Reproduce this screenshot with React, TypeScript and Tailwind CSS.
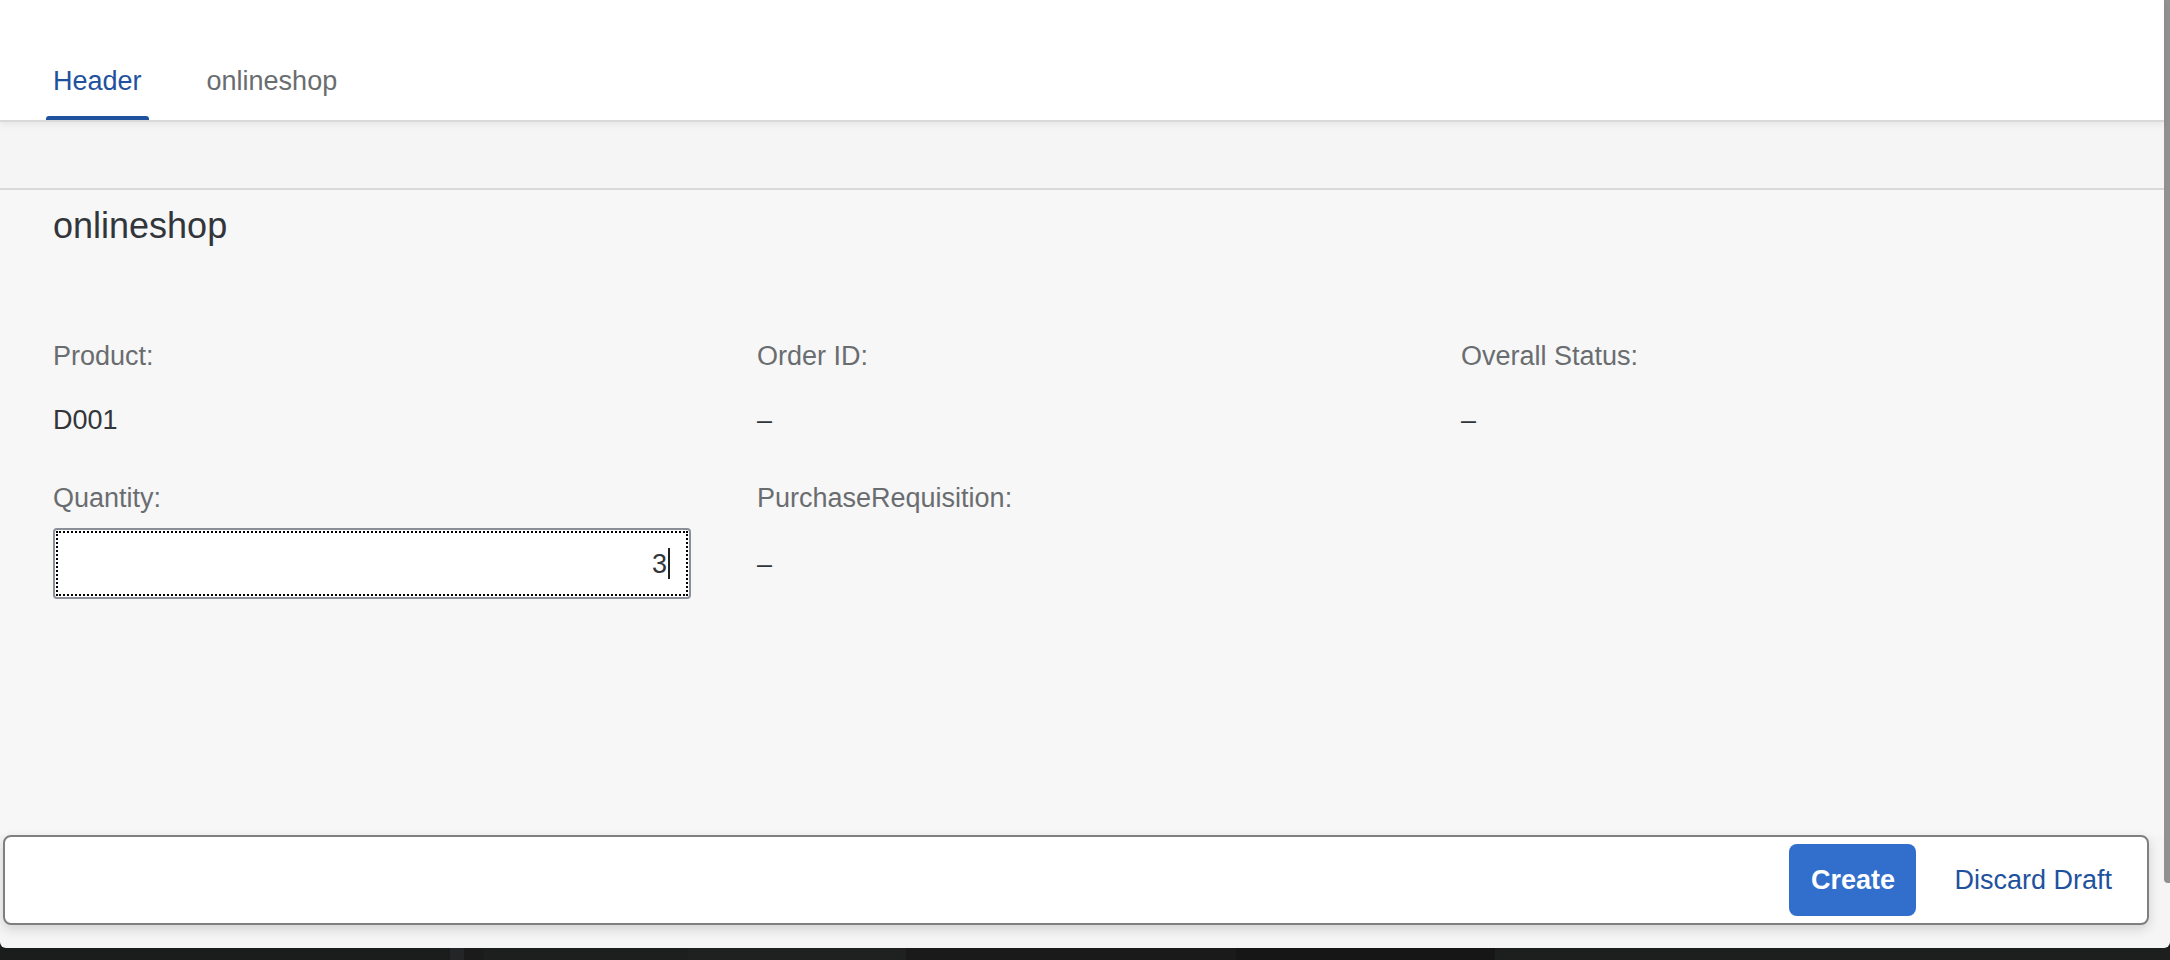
export default function App() {
  const label = "h-[32px] text-[27px] leading-[32px] text-[#6a6d70] whitespace-nowrap";
  const valueBox = "h-[71px] flex items-center text-[27px] leading-[32px] text-[#32363a]";
  return (
    <div className="w-[2170px] h-[960px] bg-[#1b1b1b] font-['Liberation_Sans',Arial,sans-serif] overflow-hidden">
      <div className="flex h-[948px] bg-[#f5f5f5] rounded-b-[6px] overflow-hidden">
        <div className="w-[2164px] flex flex-col">
          <header className="h-[122px] shrink-0 bg-white border-b-2 border-[#d9d9d9] shadow-[0_3px_6px_rgba(0,0,0,0.06)] relative z-10 flex items-end pl-[46px] gap-[51px]">
            <div className="relative px-[7px] pb-[23px] text-[27px] leading-[32px] text-[#1f529e]">
              Header
              <span className="absolute left-0 right-0 bottom-0 h-[4px] rounded-t-[3px] bg-[#1f519c]" />
            </div>
            <div className="px-[7px] pb-[23px] text-[27px] leading-[32px] text-[#6a6d70]">onlineshop</div>
          </header>
          <div className="h-[68px] shrink-0 bg-[#f5f5f5] border-b-2 border-[#d9d9d9]" />
          <main className="flex-1 bg-[#f7f7f7] pl-[53px] pt-[15px]">
            <h1 className="text-[36px] leading-[42px] text-[#32363a] font-normal">onlineshop</h1>
            <div className="mt-[93px] grid grid-cols-[704px_704px_704px] gap-y-[27px]">
              <div className="flex flex-col">
                <div className={label}>Product:</div>
                <div className={valueBox + " mt-[12px]"}>D001</div>
              </div>
              <div className="flex flex-col">
                <div className={label}>Order ID:</div>
                <div className={valueBox + " mt-[12px]"}>–</div>
              </div>
              <div className="flex flex-col">
                <div className={label}>Overall Status:</div>
                <div className={valueBox + " mt-[12px]"}>–</div>
              </div>
              <div className="flex flex-col">
                <div className={label}>Quantity:</div>
                <div className="mt-[14px] w-[638px] h-[71px] bg-white border-2 border-[#8b9098] rounded-[4px] p-[1px]">
                  <div className="h-full border-2 border-dotted border-black flex items-center justify-end pr-[16px] text-[27px] leading-[32px] text-[#32363a]">
                    <span>3</span>
                    <span className="ml-[1px] w-[2px] h-[31px] bg-[#222]" />
                  </div>
                </div>
              </div>
              <div className="flex flex-col">
                <div className={label}>PurchaseRequisition:</div>
                <div className={valueBox + " mt-[14px]"}>–</div>
              </div>
              <div />
            </div>
          </main>
          <footer className="h-[90px] shrink-0 ml-[3px] mr-[15px] mb-[23px] bg-white border-2 border-[#7f7f7f] rounded-[8px] shadow-[0_4px_12px_rgba(0,0,0,0.15)] flex items-center justify-end pr-[15px]">
            <button className="w-[127px] h-[72px] rounded-[8px] bg-[#326ecc] text-white font-bold text-[27px] leading-[32px]">Create</button>
            <button className="ml-[16px] pl-[22px] pr-[20px] h-[72px] text-[#1f529e] text-[27px] leading-[32px]">Discard Draft</button>
          </footer>
        </div>
        <div className="w-[6px] flex flex-col">
          <div className="h-[883px] bg-[#919191] rounded-bl-[4px]" />
        </div>
      </div>
      <div className="flex h-[12px]">
        <div className="w-[450px] bg-[#1b1c1c]" />
        <div className="w-[14px] bg-[#242526]" />
        <div className="w-[20px] bg-[#1b1b1b]" />
        <div className="w-[204px] bg-[#1d1e1e]" />
        <div className="w-[218px] bg-[#1f2020]" />
        <div className="w-[330px] bg-[#1a1a1a]" />
        <div className="w-[259px] bg-[#161616]" />
        <div className="flex-1 bg-[#1d1e1e]" />
      </div>
    </div>
  );
}
